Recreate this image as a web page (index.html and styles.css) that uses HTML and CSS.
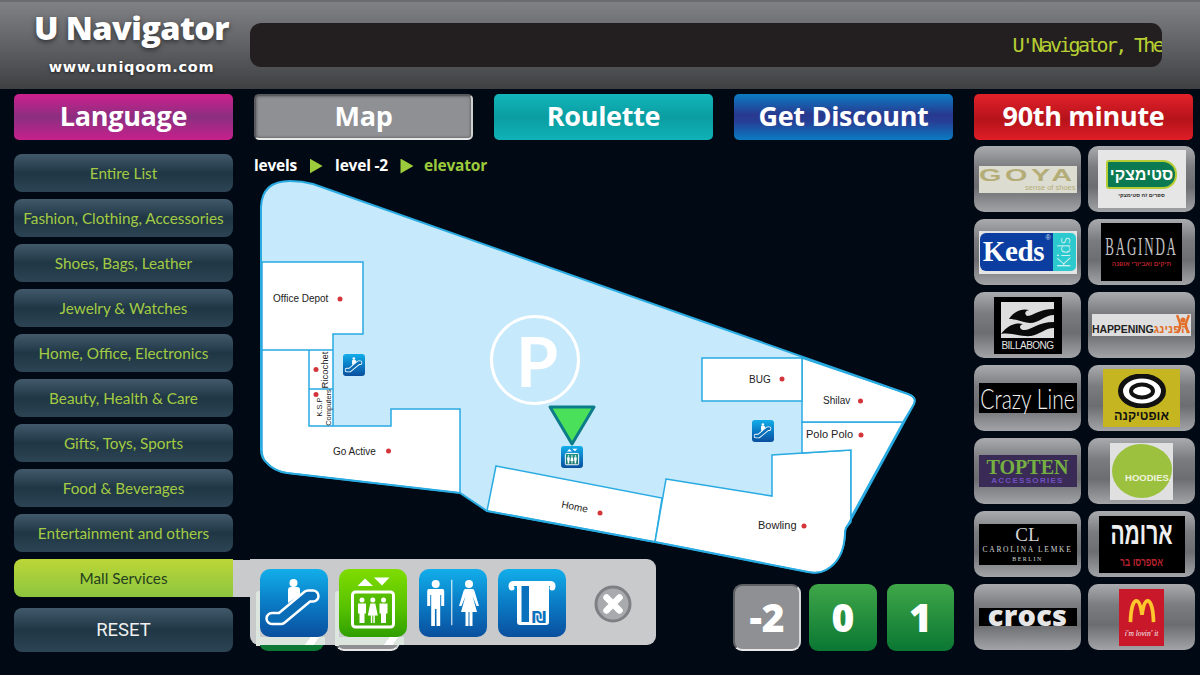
FILE: index.html
```html
<!DOCTYPE html>
<html lang="en">
<head>
<meta charset="utf-8">
<title>U Navigator</title>
<link rel="stylesheet" href="styles.css">
</head>
<body>
<svg class="defs" xmlns="http://www.w3.org/2000/svg" aria-hidden="true">
  <defs>
    <linearGradient id="blue" x1="0" y1="0" x2="0" y2="1">
      <stop offset="0" stop-color="#12aeea"/><stop offset=".5" stop-color="#0a7cc6"/><stop offset="1" stop-color="#0a4f9e"/>
    </linearGradient>
    <linearGradient id="green" x1="0" y1="0" x2="0" y2="1">
      <stop offset="0" stop-color="#7fdc00"/><stop offset=".6" stop-color="#55c000"/><stop offset="1" stop-color="#2f9e00"/>
    </linearGradient>
    <symbol id="g-esc" viewBox="0 0 68 68">
      <polyline points="12,49.500 21,49.500 48,27 53,27" fill="none" stroke="#fff" stroke-width="13.500" stroke-linecap="round" stroke-linejoin="round"/>
      <polyline points="12,49.500 21,49.500 48,27 53,27" fill="none" stroke="#0a6db8" stroke-width="8.500" stroke-linecap="round" stroke-linejoin="round"/>
      <circle cx="33.500" cy="14" r="4" fill="#fff"/>
      <path d="M28 21 q0-3 3-3 h6 q3 0 3 3 v5 l-12 8z" fill="#fff"/>
    </symbol>
    <symbol id="g-elev" viewBox="0 0 68 68">
      <path d="M18.500 17 L26 9.500 L34 17Z M35 8.500 H50.500 L43 16.500Z" fill="#fff"/>
      <rect x="13.500" y="23" width="41" height="35" rx="3" fill="#3fa800" fill-opacity=".35" stroke="#fff" stroke-width="3"/>
      <g fill="#fff">
        <circle cx="23" cy="31" r="2.500"/><path d="M19 34.500 h8 v10 h-1.500 v9.500 h-5 v-9.500 h-1.500z"/>
        <circle cx="33.800" cy="31" r="2.500"/><path d="M31.300 34.500 h5 l2.500 12 h-3 v7.500 h-1.500 v-7.500 h-1 v7.500 h-1.500 v-7.500 h-3z"/>
        <circle cx="44.500" cy="31" r="2.500"/><path d="M40.500 34.500 h8 v10 h-1.500 v9.500 h-5 v-9.500 h-1.500z"/>
      </g>
    </symbol>
    <symbol id="g-wc" viewBox="0 0 68 68">
      <g fill="#fff">
        <circle cx="16.700" cy="15" r="4"/>
        <path d="M10 20 h13.500 q1.700 0 1.700 2 v15 h-3 v-11 h-1 v31 h-3.700 v-17 h-1.600 v17 h-3.700 v-31 h-1 v11 h-3 v-15 q0-2 1.800-2z"/>
        <rect x="32.300" y="10.700" width="1" height="45.500"/>
        <circle cx="50" cy="15" r="4"/>
        <path d="M46.500 20 h7 q1.500 0 2 2 l4.500 15 h-2.500 l-4-10 l4.500 16 h-4.500 v14 h-3 v-14 h-1 v14 h-3 v-14 h-4.500 l4.500-16 l-4 10 h-2.500 l4.500-15 q.5-2 2-2z"/>
      </g>
    </symbol>
    <symbol id="g-atm" viewBox="0 0 68 68">
      <path d="M16 12 H52 q5.500 0 5.500 5 q0 4.500-3.500 4.500 q-2.500 0-2.500-2.500 q0-1.500 1-2 H15.500 q1 .5 1 2 q0 2.500-2.500 2.500 q-3.500 0-3.500-4.500 q0-5 5.500-5z" fill="#fff"/>
      <path d="M19 16 H51 V53 q0 3-3 3 H22 q-3 0-3-3z" fill="#fff"/>
      <rect x="23.500" y="17" width="7.500" height="36" fill="#0a72bd"/>
      <text x="41" y="54" class="shekel" text-anchor="middle">₪</text>
    </symbol>
  </defs>
</svg>

<div class="app">
  <header class="topbar">
    <div class="brand">
      <div class="brand-name">U Navigator</div>
      <div class="brand-url">www.uniqoom.com</div>
    </div>
    <div class="ticker"><span>U'Navigator, The</span></div>
  </header>

  <nav class="tabs">
    <div class="tab tab-magenta">Language</div>
    <div class="tab tab-grey">Map</div>
    <div class="tab tab-teal">Roulette</div>
    <div class="tab tab-blue">Get Discount</div>
    <div class="tab tab-red">90th minute</div>
  </nav>

  <main class="content">
    <aside class="side">
      <div class="cat">Entire List</div>
      <div class="cat">Fashion, Clothing, Accessories</div>
      <div class="cat">Shoes, Bags, Leather</div>
      <div class="cat">Jewelry &amp; Watches</div>
      <div class="cat">Home, Office, Electronics</div>
      <div class="cat">Beauty, Health &amp; Care</div>
      <div class="cat">Gifts, Toys, Sports</div>
      <div class="cat">Food &amp; Beverages</div>
      <div class="cat">Entertainment and others</div>
      <div class="cat cat-active">Mall Services</div>
      <div class="cat cat-reset">RESET</div>
    </aside>

    <section class="center">
      <div class="crumbs">
        <span>levels</span><i class="arrow"></i>
        <span>level -2</span><i class="arrow"></i>
        <span class="crumb-now">elevator</span>
      </div>

      <svg class="map" xmlns="http://www.w3.org/2000/svg" viewBox="250 175 680 409" width="680" height="409">
        <path class="floor" d="M261 207 Q262 181 290 181 Q302 181 313 184 L908 394 Q917 397 914 404 L848 525 Q845 528 845 534 Q844 560 826 570 Q819 574 808 572 L655 542 L487 511 L460 493 L287 473 Q274 471 267 463 Q261 458 261 450Z"/>
        <path class="shop" d="M262 262 H363 V334 H333 V426 H391 V409 H460 V493 L287 473 Q274 471 267 463 Q262 458 262 450Z"/>
        <path class="shop" d="M496 466 L662 498 L655 542 L487 511Z"/>
        <path class="shop" d="M666 479 L772 496 V455 L851 450 V522 L847 527 Q845 528 845 534 Q844 560 826 570 Q819 574 808 572 L655 542Z"/>
        <path class="shop" d="M802 422 H903 L851 517 V450 L802 453Z"/>
        <path class="shop" d="M802 358 L908 394 Q917 397 914 404 L903 422 H802Z"/>
        <rect class="shop" x="702" y="358" width="100" height="43"/>
        <path class="line" d="M262 350 H333 M309 350 V426 H333 M309 389 H333"/>
        <path class="edge" d="M261 207 Q262 181 290 181 Q302 181 313 184 L908 394 Q917 397 914 404 L848 525 Q845 528 845 534 Q844 560 826 570 Q819 574 808 572 L655 542 L487 511 L460 493 L287 473 Q274 471 267 463 Q261 458 261 450Z"/>

        <circle class="ring" cx="535" cy="360" r="43.500"/>
        <text class="parking" x="537" y="387" text-anchor="middle">P</text>

        <g class="dots">
          <circle cx="340" cy="299" r="2.500"/><circle cx="316" cy="369.500" r="2.500"/><circle cx="316" cy="394.500" r="2.500"/>
          <circle cx="388.500" cy="451" r="2.500"/><circle cx="600" cy="513" r="2.500"/><circle cx="782" cy="379" r="2.500"/>
          <circle cx="860.500" cy="401" r="2.500"/><circle cx="861" cy="435" r="2.500"/><circle cx="804" cy="526" r="2.500"/>
        </g>

        <text class="label" x="273" y="302">Office Depot</text>
        <text class="label" x="333" y="454.500">Go Active</text>
        <text class="label" x="749" y="382.500">BUG</text>
        <text class="label" x="823" y="404">Shilav</text>
        <text class="label label-lg" x="806" y="438">Polo Polo</text>
        <text class="label label-lg" x="758" y="529">Bowling</text>
        <text class="label" text-anchor="middle" transform="translate(574 510) rotate(11)">Home</text>
        <text class="label-mid" text-anchor="middle" transform="translate(328 370) rotate(-90)">Ricochet</text>
        <text class="label-sm" text-anchor="middle" transform="translate(322 407) rotate(-90)">K.S.P</text>
        <text class="label-sm" text-anchor="middle" transform="translate(331 407.500) rotate(-90)">Computers</text>

        <g>
          <rect x="343" y="354" width="22" height="22" rx="3" fill="url(#blue)"/>
          <use href="#g-esc" x="343" y="354" width="22" height="22"/>
          <rect x="752" y="420" width="22" height="22" rx="3" fill="url(#blue)"/>
          <use href="#g-esc" x="752" y="420" width="22" height="22"/>
          <rect x="561" y="446" width="22" height="22" rx="3" fill="url(#blue)"/>
          <use href="#g-elev" x="561" y="446" width="22" height="22"/>
        </g>
        <path class="pin" d="M550 407 H594 L572 444Z"/>
      </svg>

      <div class="levels">
        <div class="level level-green level-ghost"></div>
        <div class="level level-grey level-ghost"></div>
        <div class="level level-grey level-main">-2</div>
        <div class="level level-green">0</div>
        <div class="level level-green level-last">1</div>
      </div>
    </section>

    <aside class="stores">
      <div class="tile"><div class="logo goya"><span class="goya-name">GOYA</span><span class="goya-sub">sense of shoes</span></div></div>
      <div class="tile"><div class="logo steim"><span class="steim-badge">סטימצקי</span><span class="steim-sub">ספרים זה סטימצקי</span></div></div>
      <div class="tile"><div class="logo keds"><span class="keds-name">Keds</span><span class="keds-reg">®</span><span class="keds-kids"><span>Kids</span></span></div></div>
      <div class="tile"><div class="logo baginda"><span class="baginda-name">BAGINDA</span><span class="baginda-sub">תיקים ואביזרי אופנה</span></div></div>
      <div class="tile"><div class="logo billa">
        <svg class="billa-mark" viewBox="0 0 53 36" width="53" height="36" xmlns="http://www.w3.org/2000/svg">
          <rect width="53" height="36" fill="#dedede"/>
          <path d="M8 17 C12 10 20 6 28 8 C24 9 23 12 26 14 C32 14 38 7 53 7 V13 C44 13 38 21 29 21 C22 21 17 17 8 17Z" fill="#0a0a0a"/>
          <path d="M0 32 C6 24 14 20 22 22 C18 23 18 27 22 28 C30 29 36 20 53 20 V26 C44 26 38 33 30 34 C20 35 10 30 0 32Z" fill="#0a0a0a"/>
        </svg>
        <span class="billa-name">BILLABONG</span></div></div>
      <div class="tile"><div class="logo happen"><span class="happen-a">HAPPENING</span><span class="happen-b">הפנינג</span>
        <svg class="happen-fig" viewBox="0 0 14 20" width="14" height="20" xmlns="http://www.w3.org/2000/svg">
          <circle cx="7" cy="6" r="2.500" fill="#e2702a"/>
          <path d="M1 1 L4 9 L4 14 L1 19 M13 1 L10 9 L10 14 L13 19 M4 10 H10" fill="none" stroke="#e2702a" stroke-width="2.400"/>
        </svg></div></div>
      <div class="tile"><div class="logo crazy"><span class="crazy-name">Crazy Line</span></div></div>
      <div class="tile"><div class="logo optik">
        <svg viewBox="0 0 52 34" width="52" height="34" xmlns="http://www.w3.org/2000/svg">
          <ellipse cx="26" cy="17" rx="21.500" ry="15" fill="#fff" stroke="#111" stroke-width="5"/>
          <ellipse cx="26" cy="17" rx="11" ry="6.500" fill="#fff" stroke="#111" stroke-width="4"/>
        </svg>
        <span class="optik-name">אופטיקנה</span></div></div>
      <div class="tile"><div class="logo topten"><span class="topten-a">TOPTEN</span><span class="topten-b">ACCESSORIES</span></div></div>
      <div class="tile"><div class="logo hoodies"><span class="hoodies-blob"><span>HOODIES.</span></span></div></div>
      <div class="tile"><div class="logo carolina"><span class="car-cl">CL</span><span class="car-name">CAROLINA LEMKE</span><span class="car-city">BERLIN</span></div></div>
      <div class="tile"><div class="logo aroma"><span class="aroma-name">ארומה</span><span class="aroma-sub">אספרסו בר</span></div></div>
      <div class="tile"><div class="logo crocs"><span>crocs</span></div></div>
      <div class="tile"><div class="logo mcd">
        <svg viewBox="0 0 30 26" width="28" height="24" xmlns="http://www.w3.org/2000/svg">
          <path d="M2.500 25 C3 8 6 2 9 2 C12 2 14 10 15 17 C16 10 18 2 21 2 C24 2 27 8 27.500 25" fill="none" stroke="#ffc72c" stroke-width="4"/>
        </svg>
        <span class="mcd-tag">i'm lovin' it</span></div></div>
    </aside>
  </main>

  <div class="popup">
    <div class="svc svc-reflect">
      <svg viewBox="0 0 68 68" width="68" height="68" xmlns="http://www.w3.org/2000/svg"><rect width="68" height="68" rx="10" fill="url(#blue)"/><use href="#g-esc" width="68" height="68"/></svg>
    </div>
    <div class="svc svc-reflect">
      <svg viewBox="0 0 68 68" width="68" height="68" xmlns="http://www.w3.org/2000/svg"><rect width="68" height="68" rx="10" fill="url(#green)"/><use href="#g-elev" width="68" height="68"/></svg>
    </div>
    <div class="svc">
      <svg viewBox="0 0 68 68" width="68" height="68" xmlns="http://www.w3.org/2000/svg"><rect width="68" height="68" rx="10" fill="url(#blue)"/><use href="#g-wc" width="68" height="68"/></svg>
    </div>
    <div class="svc">
      <svg viewBox="0 0 68 68" width="68" height="68" xmlns="http://www.w3.org/2000/svg"><rect width="68" height="68" rx="10" fill="url(#blue)"/><use href="#g-atm" width="68" height="68"/></svg>
    </div>
    <svg class="close" viewBox="0 0 38 38" width="38" height="38" xmlns="http://www.w3.org/2000/svg">
      <circle cx="19" cy="19" r="17" fill="#a9aaad" stroke="#7f8083" stroke-width="3"/>
      <path d="M12.500 12.500 L25.500 25.500 M25.500 12.500 L12.500 25.500" stroke="#fff" stroke-width="6.500" stroke-linecap="round"/>
    </svg>
  </div>
</div>
</body>
</html>
```

FILE: styles.css
```css
* { box-sizing: border-box; }
html, body { margin: 0; padding: 0; background: #010a14; }
body { font-family: "Lato", "Liberation Sans", sans-serif; }
.defs { display: block; width: 0; height: 0; }

.app { position: relative; width: 1200px; height: 675px; overflow: hidden; background: #010a14; }

/* header */
.topbar {
  display: flex; align-items: center; height: 89px;
  border-top: 2px solid #6a6b6e;
  background: linear-gradient(#808184, #6d6e71 30%, #3f4042);
}
.brand { width: 250px; flex: none; display: flex; flex-direction: column; align-items: center; color: #fff; padding-left: 13px; margin-top: -6px; }
.brand-name { font: 800 32.500px/40px "Open Sans", sans-serif; letter-spacing: -.6px; text-shadow: 0 2px 5px rgba(0,0,0,.55); white-space: nowrap; }
.brand-url { font: 700 14.500px/20px "DejaVu Sans", sans-serif; letter-spacing: .7px; margin-top: 9px; text-shadow: 0 1px 3px rgba(0,0,0,.6); white-space: nowrap; }
.ticker {
  width: 912px; height: 44px; margin-top: -2px; border-radius: 11px; background: #231f20;
  display: flex; align-items: center; justify-content: flex-end; overflow: hidden;
  color: #b7cf32; font: 400 20px/1 "DejaVu Sans Mono", monospace; letter-spacing: -2.700px; white-space: nowrap;
}

/* top tabs */
.tabs { display: flex; gap: 21px; padding: 5px 0 0 14px; }
.tab {
  width: 219px; height: 46px; border-radius: 5px; display: flex; align-items: center; justify-content: center;
  color: #fff; font: 700 27px/1 "Open Sans", sans-serif; letter-spacing: -.3px; padding-bottom: 3px;
}
.tab-magenta { background: linear-gradient(#cd1f8d, #8b2f80 50%, #c7208c); }
.tab-grey { background: #8f9093; border: 2px solid #5a5b5e; border-bottom-color: #e8e8e8; border-right-color: #d0d0d0; box-shadow: inset 0 0 3px rgba(0,0,0,.5); }
.tab-teal { background: linear-gradient(#12b6bb, #0a9da1 50%, #10b2b8); }
.tab-blue { background: linear-gradient(#0b7cc4, #28398f 45%, #263f95 60%, #0a7cc3); }
.tab-red { background: linear-gradient(#e3212a, #b5131b 55%, #e01d26); }

/* three columns */
.content { display: flex; padding: 6px 0 0 14px; }

.side { width: 219px; flex: none; display: flex; flex-direction: column; gap: 7px; margin-top: 8px; }
.cat {
  height: 38px; border-radius: 8px; display: flex; align-items: center; justify-content: center;
  background: linear-gradient(#41596a, #1f3745 50%, #2c4453);
  color: #a3cb44; font-size: 15.300px; white-space: nowrap;
}
.cat-active { background: linear-gradient(#bcd637, #8cc63f); color: #24401c; border-radius: 8px 0 0 8px; position: relative; z-index: 3; }
.cat-reset { height: 44px; margin-top: 4px; color: #f0f0f0; font-size: 18.500px; font-family: "Roboto", sans-serif; }

.center { width: 741px; flex: none; display: flex; flex-direction: column; }
.crumbs {
  height: 29px; padding: 11px 0 0 21px; display: flex; align-items: center; color: #fff;
  font: 700 15.500px/1 "Open Sans", sans-serif; letter-spacing: -.2px;
}
.crumb-now { color: #9ccb3b; margin-left: -2px; }
.arrow {
  width: 13px; height: 15px; margin: 0 12.500px; background: #9ccb3b;
  clip-path: polygon(0 0, 100% 50%, 0 100%);
}
.map { display: block; margin-left: 17px; }
.floor { fill: #c6e9fb; }
.shop { fill: #fff; stroke: #29abe2; stroke-width: 1.500; }
.line { fill: none; stroke: #29abe2; stroke-width: 1.500; }
.edge { fill: none; stroke: #29abe2; stroke-width: 2; }
.ring { fill: none; stroke: #fff; stroke-width: 3; }
.parking { fill: #fff; font: 700 68px "Lato", sans-serif; }
.dots { fill: #d4353a; }
.label { fill: #222; font: 400 10px "Liberation Sans", sans-serif; }
.label-lg { font-size: 11px; }
.label-mid { fill: #222; font: 400 9.500px "Liberation Sans", sans-serif; }
.label-sm { fill: #222; font: 400 7.500px "Liberation Sans", sans-serif; }
.pin { fill: #4be05a; stroke: #0c7c88; stroke-width: 3; stroke-linejoin: round; }
.shekel { fill: #0a72bd; font: 700 16px "DejaVu Sans", sans-serif; }

.levels { display: flex; gap: 8px; padding-left: 26px; }
.level {
  width: 68px; height: 67px; border-radius: 9px; display: flex; align-items: center; justify-content: center;
  color: #fff; font: 800 39px/1 "Open Sans", sans-serif; padding-bottom: 3px;
}
.level-green { background: linear-gradient(#3fa648, #0a7733); }
.level-grey { background: #8f9093; border: 2px solid #5e5f62; border-bottom-color: #e8e8e8; border-right-color: #d8d8d8; }
.level-ghost { width: 65px; margin-right: 3px; }
.level-main { margin-left: auto; }
.level-last { margin-right: 20px; width: 67px; margin-left: 2px; }

/* store tiles */
.stores { width: 221px; flex: none; display: grid; grid-template-columns: 107px 107px; grid-auto-rows: 66px; gap: 7px; }
.tile {
  border-radius: 10px; display: flex; align-items: center; justify-content: center;
  background: linear-gradient(#a9abae, #7b7c7f 32%, #6c6d70 62%, #a2a4a7);
}
.logo { display: flex; flex-direction: column; align-items: center; justify-content: center; white-space: nowrap; }

.goya { width: 98px; height: 27px; background: #dcdcd0; color: #b4ad78; align-items: flex-start; }
.goya-name { font: 700 16px/17px "Liberation Sans", sans-serif; letter-spacing: 2px; transform: scaleX(1.8); transform-origin: left; }
.goya-sub { align-self: flex-end; font: 400 7.500px/8px "Liberation Sans", sans-serif; padding-right: 1px; }

.steim { width: 88px; height: 58px; background: #e6e6e6; gap: 3px; }
.steim-badge { width: 71px; height: 29px; border-radius: 3px 14px 14px 3px; background: #0b7a52; border: 2px solid #b6cc35; color: #fff; font: 700 16px/25px "Liberation Sans", sans-serif; text-align: center; }
.steim-sub { font: 700 5.500px/7px "Liberation Sans", sans-serif; color: #333; }

.keds { width: 98px; height: 43px; background: #e4e4e4; flex-direction: row; padding: 2px 1px; position: relative; }
.keds-name { width: 73px; height: 38px; background: #0b3ea0; border-radius: 6px 0 0 6px; color: #fff; font: 700 29px/37px "Liberation Serif", serif; text-align: center; letter-spacing: -.3px; padding-right: 5px; }
.keds-reg { position: absolute; left: 67px; top: 3px; color: #cfe0f5; font: 400 7px/8px "Liberation Sans", sans-serif; }
.keds-kids { width: 23px; height: 38px; background: #2cc9cf; border-radius: 0 5px 5px 0; display: flex; align-items: center; justify-content: center; color: #e8f8f8; font: 300 17px/1 "Lato", sans-serif; }
.keds-kids span { transform: rotate(-90deg); display: block; }

.baginda { width: 81px; height: 58px; background: #000; color: #c4c4c4; gap: 6px; padding-top: 3px; }
.baginda-name { font: 400 13px/14px "Liberation Serif", serif; letter-spacing: 1.800px; transform: scaleY(1.9); }
.baginda-sub { color: #b3222a; font: 700 6.500px/7px "Liberation Sans", sans-serif; }

.billa { width: 68px; height: 57px; background: #000; padding-top: 5px; justify-content: flex-start; gap: 1px; }
.billa-mark { display: block; }
.billa-name { color: #e4e4e4; font: 400 10px/13px "Liberation Sans", sans-serif; letter-spacing: -.5px; }

.happen { width: 99px; height: 22px; background: #dedede; flex-direction: row; align-items: flex-end; justify-content: flex-start; padding-bottom: 1px; position: relative; }
.happen-a { color: #222; font: 700 10.500px/12px "Liberation Sans", sans-serif; letter-spacing: -.1px; }
.happen-b { color: #e2702a; font: 700 12px/12px "Liberation Sans", sans-serif; }
.happen-fig { position: absolute; right: 1px; top: 0; }

.crazy { width: 98px; height: 30px; background: #000; color: #f2f2f2; }
.crazy-name { font: 300 21px/22px "Lato", sans-serif; transform: scaleY(1.35); }

.optik { width: 77px; height: 58px; background: #c5b520; gap: 2px; }
.optik-name { color: #111; font: 700 12.500px/13px "Liberation Sans", sans-serif; }

.topten { width: 98px; height: 32px; background: #3a2b56; }
.topten-a { color: #76b043; font: 700 20px/18px "Liberation Serif", serif; }
.topten-b { color: #7150c0; font: 700 8px/9px "Liberation Sans", sans-serif; letter-spacing: 1.300px; }

.hoodies { width: 63px; height: 57px; background: #dfe0df; }
.hoodies-blob { width: 60px; height: 54px; border-radius: 48% 52% 50% 50% / 50% 46% 54% 50%; background: #9cc13e; display: flex; align-items: center; justify-content: flex-end; padding: 14px 0 0 0; color: #eef3df; font: 700 9.500px/1 "Liberation Sans", sans-serif; }

.carolina { width: 98px; height: 41px; background: #000; color: #d4d4d4; font-family: "Liberation Serif", serif; }
.car-cl { font-size: 19px; line-height: 20px; }
.car-name { font-size: 7.500px; line-height: 10px; letter-spacing: 1.700px; }
.car-city { font-size: 6px; line-height: 8px; letter-spacing: 1.500px; }

.aroma { width: 86px; height: 57px; background: #000; gap: 14px; }
.aroma-name { color: #eee; font: 700 21px/22px "Liberation Sans", sans-serif; transform: scaleY(1.5); }
.aroma-sub { color: #b5222c; font: 700 8.500px/9px "Liberation Sans", sans-serif; transform: scaleY(1.4); }

.crocs { width: 98px; height: 18px; background: #000; color: #e6e6e6; }
.crocs span { font: 800 29px/18px "Open Sans", sans-serif; letter-spacing: .2px; padding-bottom: 4px; }

.mcd { width: 45px; height: 57px; background: #c8182a; padding-top: 3px; gap: 7px; }
.mcd-tag { color: #f4f4f4; font: italic 400 7.500px/8px "Liberation Serif", serif; }

/* service popup over the page */
.popup {
  position: absolute; left: 250px; top: 559px; width: 406px; height: 86px; z-index: 2;
  background: #c9cacc; border-radius: 0 9px 9px 9px;
  display: flex; align-items: flex-start; gap: 11.500px; padding: 9.500px 0 0 9.500px;
}
.popup::before { content: ""; position: absolute; left: -17px; top: 1px; width: 18px; height: 37px; background: #c9cacc; }
.svc { width: 68px; height: 68px; position: relative; }
.svc svg { display: block; }
.svc-reflect::before {
  content: ""; position: absolute; left: -4px; top: 22px; width: 4px; height: 55px;
  background: #dde5df; border-radius: 3px 0 0 0;
}
.svc-reflect::after {
  content: ""; position: absolute; left: -1px; top: 68px; width: 66px; height: 8px;
  background: linear-gradient(125deg, #dce6df 0 72%, #fff 72% 84%, #dce6df 84%);
}
.close { display: block; margin: 16px 0 0 16px; }
```
